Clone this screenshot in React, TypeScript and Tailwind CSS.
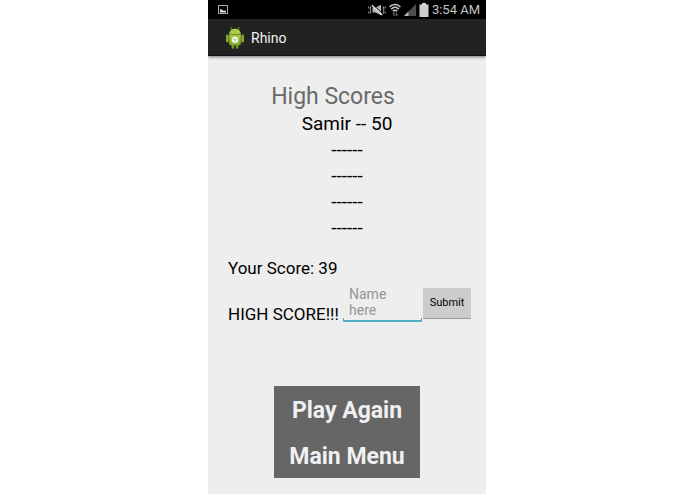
import { useState } from 'react'

const scores = ['Samir -- 50', '------', '------', '------', '------']

function PictureIcon() {
  return (
    <svg className="w-3 h-3" viewBox="0 0 12 12" fill="none">
      <rect x="1.5" y="1.5" width="9" height="8" stroke="#a8a8a8" />
      <path d="M3 8.500V5.500l1.500-.3L6 6.500l1 .3 1-.3 1 .5v1.500z" fill="#e0e0e0" />
    </svg>
  )
}

function MuteIcon() {
  return (
    <svg className="w-[18px] h-3" viewBox="0 0 18 12" fill="none">
      <path d="M4.500 3.500h3L13 .8v10.400L7.500 8.500h-3z" fill="#b4b4b4" />
      <path d="M4.800 .6l10 9.200" stroke="#000" strokeWidth="1" />
      <path d="M3.800 1.200l10.500 9.800" stroke="#dadada" strokeWidth="1.500" />
      <path d="M2.600 2.500v2L2 6l.6 1.500v2M.8 2.500v2M.8 7.500v2M15.400 2.500v2L16 6l-.6 1.500v2M17.200 2.500v2M17.200 7.500v2" stroke="#a8a8a8" />
    </svg>
  )
}

function WifiIcon() {
  return (
    <svg className="w-3 h-[14px]" viewBox="0 0 12 14" fill="none">
      <path d="M.5 4C3.500 .5 8.500 .5 11.500 4M2.200 6.200c2.200-2.600 5.400-2.600 7.600 0M3.900 8.200c1.300-1.400 2.900-1.400 4.200 0" stroke="#cccccc" strokeWidth="1.500" />
      <path d="M5 13V9.500L3.800 11M7.300 9.500V13l1.400-1.500" stroke="#7a7a7a" />
    </svg>
  )
}

function SignalIcon() {
  return (
    <svg className="w-3 h-3" viewBox="0 0 12 12">
      <path d="M12 0v12H0z" fill="#4c4c4c" />
      <path d="M4.500 7.500V12H0z" fill="#b8b8b8" />
    </svg>
  )
}

function BatteryIcon() {
  return (
    <svg className="w-[10px] h-[14px]" viewBox="0 0 10 14">
      <path d="M3 0h4v1.500h2.500V14H.5V1.500H3z" fill="#cfcfcf" />
    </svg>
  )
}

function AndroidLogo() {
  return (
    <svg className="w-5 h-[22px]" viewBox="0 0 20 22">
      <defs>
        <linearGradient id="droid" x1="0" y1="0" x2="0" y2="1">
          <stop offset="0" stopColor="#a9cb45" />
          <stop offset="1" stopColor="#6f9420" />
        </linearGradient>
      </defs>
      <path d="M6 .5l1.400 2.500M14 .5L12.600 3" stroke="#a4c639" strokeWidth=".8" strokeLinecap="round" />
      <path d="M4.200 7.300C4.200 3.900 6.600 1.800 10 1.800s5.800 2.100 5.800 5.500z" fill="#a8ca44" />
      <circle cx="7.600" cy="4.900" r=".5" fill="#d8e8a8" />
      <circle cx="12.400" cy="4.900" r=".5" fill="#d8e8a8" />
      <rect x="1" y="7.500" width="2.700" height="8" rx="1.200" fill="#86a82c" />
      <rect x="16.300" y="7.500" width="2.700" height="8" rx="1.200" fill="#86a82c" />
      <path d="M4.200 7.600h11.600v9.400c0 .7-.5 1.200-1.200 1.200h-1.200v2.300a1.300 1.300 0 0 1-2.600 0v-2.300H9.200v2.300a1.300 1.300 0 0 1-2.600 0v-2.300H5.400c-.7 0-1.200-.5-1.200-1.200z" fill="url(#droid)" />
      <circle cx="10" cy="12.800" r="4" fill="#9dbb55" />
      <circle cx="10" cy="12.800" r="3.200" fill="#f0f4e4" />
      <path d="M8.200 11.800l1.800 1 1.800-1M10 12.800v2" stroke="#a9bf70" strokeWidth=".8" fill="none" />
    </svg>
  )
}

function StatusBar() {
  return (
    <div className="h-[19px] flex items-center justify-between bg-black pl-[9px] pr-[6px]">
      <PictureIcon />
      <div className="flex items-center gap-[3px]">
        <MuteIcon />
        <WifiIcon />
        <SignalIcon />
        <BatteryIcon />
        <span className="text-[13px] leading-[19px] text-[#c4c4c4]">3:54 AM</span>
      </div>
    </div>
  )
}

export default function App() {
  const [name, setName] = useState('')

  return (
    <div className="min-h-screen bg-white pr-px flex justify-center font-[Roboto,sans-serif] text-black">
      <div className="w-full max-w-[278px] bg-[#eeeeee] flex flex-col overflow-hidden">
        <StatusBar />
        <header className="h-[37px] flex items-center gap-[6px] bg-[#222222] border-b border-[#111111] pt-[2px] pl-[17px] shadow-[0_1px_3px_#00000080]">
          <AndroidLogo />
          <h1 className="text-[14px] text-[#f3f3f3]">Rhino</h1>
        </header>

        <main className="px-5 pt-[26px] pb-4 flex flex-col">
          <h2 className="pr-7 text-center text-[23px] leading-[29px] text-[#6a6a6a]">High Scores</h2>
          <ol className="text-center text-[19px] leading-[26px]">
            {scores.map((score, i) => (
              <li key={i}>{score}</li>
            ))}
          </ol>

          <p className="pt-[14px] text-[17px] leading-[26px]">Your Score: 39</p>

          {/* Name entry */}
          <form className="-mr-[5px] pt-[5px] flex items-start" onSubmit={(e) => e.preventDefault()}>
            <label htmlFor="name" className="pt-[15px] w-[115px] shrink-0 whitespace-nowrap text-[17px] leading-[26px]">
              HIGH SCORE!!!
            </label>
            <div className="w-[79px]">
              <textarea
                id="name"
                rows={2}
                value={name}
                onChange={(e) => setName(e.target.value)}
                placeholder="Name here"
                className="block w-full h-8 px-[6px] resize-none overflow-hidden outline-none text-[14px] leading-4 placeholder:text-[#959595]"
              />
              <div className="h-1 border-x border-b-2 border-[#4fadc6]" />
            </div>
            <button
              type="submit"
              className="ml-px mt-[2px] pt-px w-12 h-[31px] shrink-0 bg-[#cccccc] border-b border-[#999999] rounded-[1px] text-[11px]"
            >
              Submit
            </button>
          </form>

          <div className="mt-[59px] w-[146px] self-center flex flex-col bg-[#666666] text-[23px] font-bold text-[#f0f0f0]">
            <button type="button" className="h-[46px] pt-1">Play Again</button>
            <button type="button" className="h-[46px] pt-1">Main Menu</button>
          </div>
        </main>
      </div>
    </div>
  )
}
